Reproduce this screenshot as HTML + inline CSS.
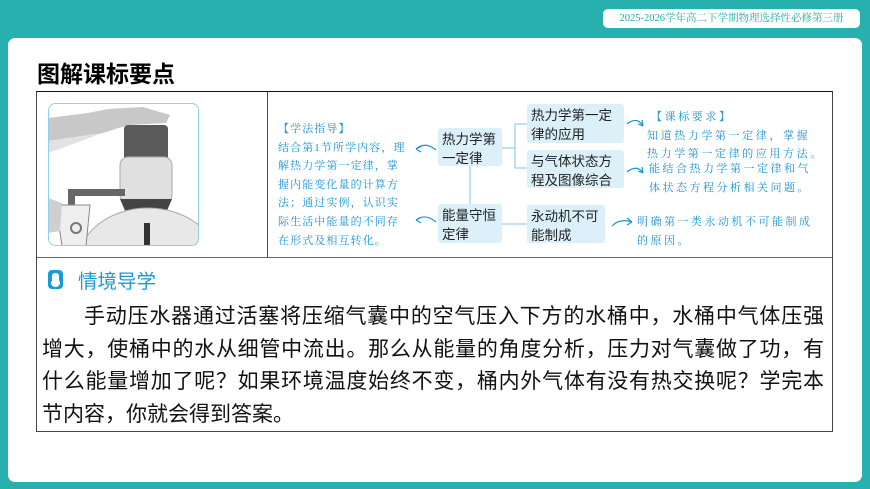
<!DOCTYPE html>
<html><head><meta charset="utf-8"><style>
*{margin:0;padding:0;box-sizing:border-box}
body{width:870px;height:489px;background:#27b0ae;position:relative;overflow:hidden;font-family:"Liberation Sans","Noto Sans CJK SC",sans-serif}
.pill{position:absolute;left:603px;top:9px;width:257px;height:19px;background:#fff;border-radius:5px;color:#27a9a6;font-size:10.5px;line-height:19px;text-align:center;font-family:"Liberation Serif","Noto Serif CJK SC",serif}
.card{position:absolute;left:8px;top:38px;width:854px;height:444px;background:#fff;border-radius:7px}
.title{position:absolute;left:37px;top:55px;font-size:23px;font-weight:bold;color:#000}
.tbl{position:absolute;left:36px;top:91px;width:797px;height:341px;border:1px solid #444;border-top:1.5px solid #111}
.vdiv{position:absolute;left:230px;top:0;width:1px;height:165px;background:#444}
.hdiv{position:absolute;left:0;top:165px;width:100%;height:1px;background:#666}
.box{position:absolute;background:#dcf0f9;border-radius:3px;font-size:13.5px;line-height:19px;color:#222;padding:2px 4px;white-space:nowrap}
.hw{position:absolute;color:#1b93d4;font-size:11px;line-height:18.6px;white-space:nowrap;font-family:"Liberation Serif","Noto Serif CJK SC",serif}
.sect{position:absolute;left:78px;top:265px;font-size:19.5px;color:#1b9ad6}
.icon{position:absolute;left:48px;top:270px;width:15px;height:19px;background:#1b9ad6;border-radius:4px}
.para{position:absolute;left:42px;top:301px;width:782px;font-size:21px;line-height:32.7px;color:#111}
.para div{text-align:justify;text-align-last:justify;white-space:nowrap}
</style></head><body>
<div class="pill">2025-2026学年高二下学期物理选择性必修第三册</div>
<div class="card"></div>
<div class="title">图解课标要点</div>
<div class="tbl"><div class="vdiv"></div><div class="hdiv"></div></div>
<svg style="position:absolute;left:48px;top:103px" width="151" height="143" viewBox="0 0 151 143">
<defs><clipPath id="c"><rect x="0" y="0" width="151" height="143" rx="7"/></clipPath></defs>
<g clip-path="url(#c)">
<rect width="151" height="143" fill="#fff"/>
<path d="M0 15 L40 10 L60 6 L95 4 L122 12 L118 20 L80 22 L55 30 L0 38Z" fill="#c8c8c8"/>
<path d="M0 38 L55 30 L0 50Z" fill="#e2e2e2"/>
<rect x="76" y="22" width="44" height="36" rx="4" fill="#5a5a5a"/>
<rect x="72" y="54" width="52" height="46" rx="8" fill="#e0e0e0" stroke="#aaa"/>
<path d="M72 96 L124 96 L118 110 L78 110Z" fill="#444"/>
<rect x="22" y="86" width="55" height="7" fill="#666"/>
<rect x="20" y="86" width="7" height="18" fill="#666"/>
<path d="M80 110 L116 110 L112 125 L84 125Z" fill="#333"/>
<ellipse cx="100" cy="160" rx="70" ry="55" fill="#e8e8e8" stroke="#aaa"/>
<rect x="96" y="120" width="6" height="23" fill="#333"/>
<path d="M8 102 L42 102 L38 143 L14 143Z" fill="#eee" stroke="#888"/>
<path d="M0 95 L14 100 L12 128 L0 130Z" fill="#cfcfcf"/>
<circle cx="28" cy="125" r="5" fill="none" stroke="#777" stroke-width="2"/>
</g>
<rect x="0.5" y="0.5" width="150" height="142" rx="7" fill="none" stroke="#8fd0ec"/>
</svg>
<div class="hw" style="left:278px;top:120px;letter-spacing:1.1px">【学法指导】<br>结合第1节所学内容，理<br>解热力学第一定律，掌<br>握内能变化量的计算方<br>法；通过实例，认识实<br>际生活中能量的不同存<br>在形式及相互转化。</div>
<div class="box" style="left:438px;top:128px;width:64px;height:38px">热力学第<br>一定律</div>
<div class="box" style="left:438px;top:204px;width:64px;height:39px">能量守恒<br>定律</div>
<div class="box" style="left:527px;top:104px;width:97px;height:39px">热力学第一定<br>律的应用</div>
<div class="box" style="left:527px;top:150px;width:97px;height:38px">与气体状态方<br>程及图像综合</div>
<div class="box" style="left:527px;top:205px;width:78px;height:38px">永动机不可<br>能制成</div>
<svg style="position:absolute;left:0;top:0" width="870" height="489">
<g fill="none" stroke="#7cc6e6" stroke-width="1">
<path d="M502 148 H515 M515 124 V168 M515 124 H527 M515 168 H527"/>
<path d="M470 166 V204"/>
<path d="M502 224 H527"/>
</g>
<g fill="none" stroke="#1b93d4" stroke-width="1.2">
<path d="M436 150 Q425 141 416 149 M416 149 l6 -3 M416 149 l5 3"/>
<path d="M436 222 Q425 213 416 220 M416 220 l6 -3 M416 220 l5 3"/>
<path d="M627 124 Q637 116 643 126 M643 126 l-1 -6 M643 126 l-5 -2"/>
<path d="M627 172 Q637 164 643 173 M643 173 l-1 -6 M643 173 l-5 -2"/>
<path d="M612 226 Q620 218 632 222 M632 222 l-5 -4 M632 222 l-5 3"/>
</g>
</svg>
<div class="hw" style="left:647px;top:108px;letter-spacing:2.6px"><span style="margin-left:4px">【课标要求】</span><br>知道热力学第一定律，掌握<br>热力学第一定律的应用方法。</div>
<div class="hw" style="left:649px;top:160px;letter-spacing:2.5px">能结合热力学第一定律和气<br>体状态方程分析相关问题。</div>
<div class="hw" style="left:637px;top:213px;letter-spacing:2.5px">明确第一类永动机不可能制成<br>的原因。</div>
<div class="icon"><div style="position:absolute;left:4px;top:3px;width:7px;height:8px;background:#fff;border-radius:3px 3px 1px 1px"></div><div style="position:absolute;left:3px;top:9px;width:9px;height:8px;background:#fff;border-radius:50%"></div></div>
<div class="sect">情境导学</div>
<div class="para">
<div style="padding-left:42px">手动压水器通过活塞将压缩气囊中的空气压入下方的水桶中，水桶中气体压强</div>
<div>增大，使桶中的水从细管中流出。那么从能量的角度分析，压力对气囊做了功，有</div>
<div>什么能量增加了呢？如果环境温度始终不变，桶内外气体有没有热交换呢？学完本</div>
<div style="text-align-last:left">节内容，你就会得到答案。</div>
</div>
</body></html>
